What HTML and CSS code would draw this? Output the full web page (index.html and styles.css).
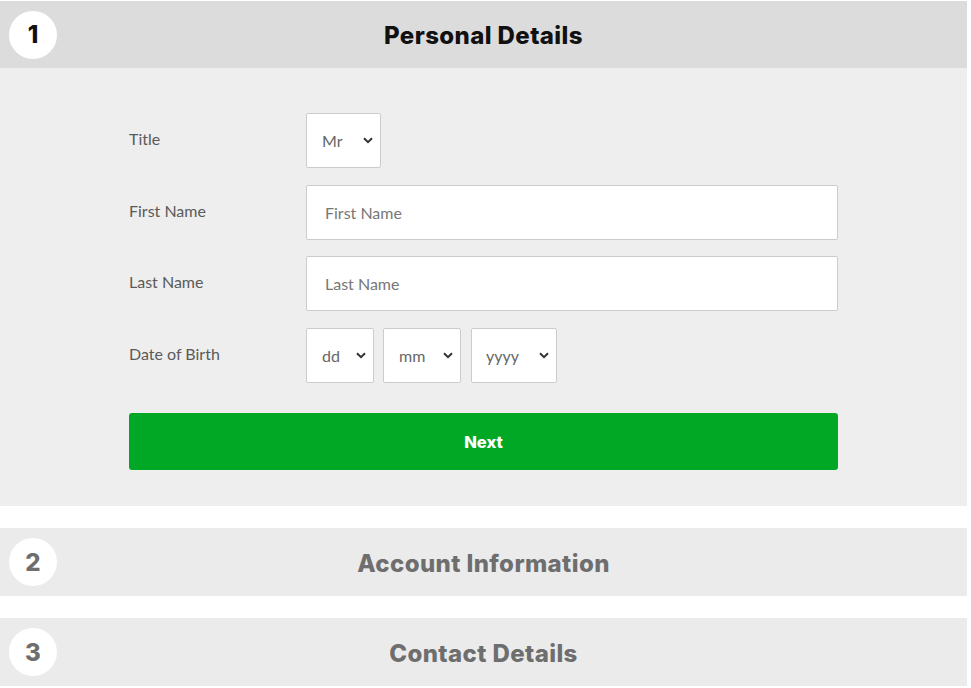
FILE: index.html
```html
<!DOCTYPE html>
<html lang="en">
<head>
<meta charset="utf-8">
<title>Registration</title>
<link rel="stylesheet" href="styles.css">
</head>
<body>
<div class="page">
  <section class="step active">
    <header class="step-head">
      <span class="step-num">1</span>
      <h2 class="step-title">Personal Details</h2>
    </header>
    <div class="step-body">
      <form class="form">
        <div class="row">
          <label class="label">Title</label>
          <span class="sel sel-title">
            <select><option>Mr</option></select>
            <svg class="chev" viewBox="0 0 10 7" width="10" height="7"><path d="M1 1.2 L5 5.2 L9 1.2" fill="none" stroke="#333" stroke-width="2"/></svg>
          </span>
        </div>
        <div class="row">
          <label class="label">First Name</label>
          <input class="input" type="text" placeholder="First Name">
        </div>
        <div class="row">
          <label class="label">Last Name</label>
          <input class="input" type="text" placeholder="Last Name">
        </div>
        <div class="row">
          <label class="label">Date of Birth</label>
          <div class="dob">
            <span class="sel sel-dd">
              <select><option>dd</option></select>
              <svg class="chev" viewBox="0 0 10 7" width="10" height="7"><path d="M1 1.2 L5 5.2 L9 1.2" fill="none" stroke="#333" stroke-width="2"/></svg>
            </span>
            <span class="sel sel-mm">
              <select><option>mm</option></select>
              <svg class="chev" viewBox="0 0 10 7" width="10" height="7"><path d="M1 1.2 L5 5.2 L9 1.2" fill="none" stroke="#333" stroke-width="2"/></svg>
            </span>
            <span class="sel sel-yy">
              <select><option>yyyy</option></select>
              <svg class="chev" viewBox="0 0 10 7" width="10" height="7"><path d="M1 1.2 L5 5.2 L9 1.2" fill="none" stroke="#333" stroke-width="2"/></svg>
            </span>
          </div>
        </div>
        <button type="button" class="next">Next</button>
      </form>
    </div>
  </section>
  <section class="step">
    <header class="step-head muted">
      <span class="step-num">2</span>
      <h2 class="step-title">Account Information</h2>
    </header>
  </section>
  <section class="step">
    <header class="step-head muted">
      <span class="step-num">3</span>
      <h2 class="step-title">Contact Details</h2>
    </header>
  </section>
</div>
</body>
</html>
```

FILE: styles.css
```css
html, body {
  margin: 0;
  padding: 0;
  background: #ffffff;
}

.page {
  width: 967px;
  padding-top: 1px;
  display: flex;
  flex-direction: column;
  gap: 22px;
}

.step-head {
  height: 67px;
  background: #dcdcdc;
  display: flex;
  align-items: center;
  position: relative;
}

.step-head.muted {
  height: 68px;
  background: #ebebeb;
}

.step-num {
  position: absolute;
  left: 9px;
  top: 50%;
  transform: translateY(-50%);
  width: 48px;
  height: 48px;
  border-radius: 50%;
  background: #ffffff;
  display: flex;
  align-items: center;
  justify-content: center;
  font-family: Inter, "Liberation Sans", sans-serif;
  font-weight: 800;
  font-size: 24px;
  color: #111111;
}

.step-title {
  margin: 0;
  width: 100%;
  text-align: center;
  font-family: Inter, "Liberation Sans", sans-serif;
  font-weight: 800;
  font-size: 24px;
  letter-spacing: 0.4px;
  color: #111111;
  padding-top: 2px;
}

.muted .step-num,
.muted .step-title {
  color: #6e6e6e;
}

.step-body {
  background: #eeeeee;
  padding: 45px 0 36px;
}

.form {
  width: 709px;
  margin: 0 auto;
  display: flex;
  flex-direction: column;
  gap: 16.6px;
}

.row {
  display: flex;
  align-items: center;
}

.label {
  width: 177px;
  flex: none;
  font-family: Lato, "Open Sans", sans-serif;
  font-size: 16px;
  color: #5a5a5a;
  margin-top: -4px;
}

.input {
  box-sizing: border-box;
  width: 532px;
  height: 55px;
  border: 1px solid #cccccc;
  border-radius: 2px;
  background: #ffffff;
  padding: 0 18px;
  font-family: Lato, "Open Sans", sans-serif;
  font-size: 16px;
  color: #333333;
  outline: none;
}

.input::placeholder {
  color: #777777;
}

.sel {
  position: relative;
  display: inline-block;
  height: 55px;
}

.sel select {
  -webkit-appearance: none;
  appearance: none;
  box-sizing: border-box;
  width: 100%;
  height: 55px;
  border: 1px solid #cccccc;
  border-radius: 2px;
  background: #ffffff;
  padding: 0 0 0 15px;
  font-family: Lato, "Open Sans", sans-serif;
  font-size: 16px;
  color: #666666;
  outline: none;
}

.chev {
  position: absolute;
  right: 8px;
  top: 24px;
  pointer-events: none;
}

.sel-title { width: 75px; }
.sel-dd { width: 68px; }
.sel-mm { width: 78px; }
.sel-yy { width: 86px; }

.sel-mm select { padding-left: 15px; }
.sel-yy select { padding-left: 14px; }

.dob {
  display: flex;
  gap: 9px;
}

.sel-yy { margin-left: 1px; }

.next {
  margin-top: 14px;
  height: 57px;
  width: 100%;
  border: none;
  border-radius: 3px;
  background: #00a826;
  color: #ffffff;
  font-family: Inter, "Liberation Sans", sans-serif;
  font-weight: 800;
  font-size: 16.5px;
  cursor: pointer;
}
```
